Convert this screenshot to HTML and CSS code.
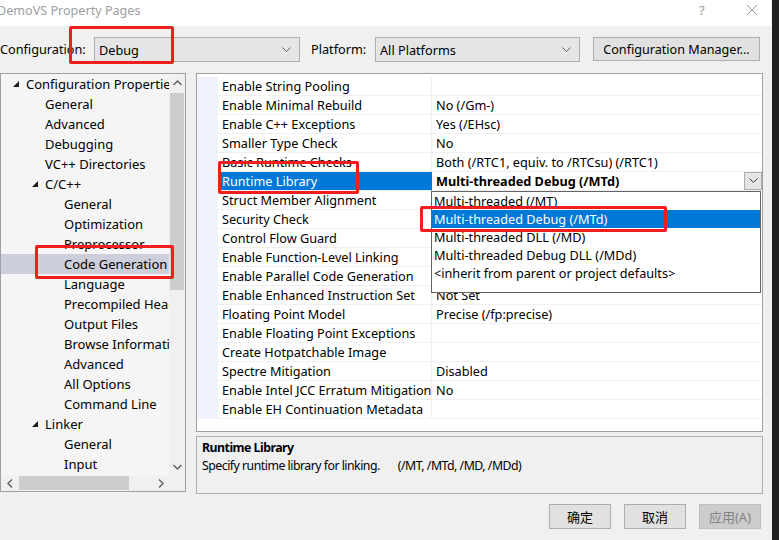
FILE: index.html
```html
<!DOCTYPE html>
<html>
<head>
<meta charset="utf-8">
<title>DemoVS Property Pages</title>
<link rel="stylesheet" href="styles.css">
</head>
<body>
<div class="screen">
  <div class="window">
    <div class="titlebar">
      <span class="title">DemoVS Property Pages</span>
      <span class="help">?</span>
      <span class="close"><svg width="12" height="12" viewBox="0 0 12 12"><path d="M1 1L11 11M11 1L1 11" stroke="#9a9a9a" stroke-width="1" fill="none"/></svg></span>
    </div>

    <div class="toolbar">
      <span class="lbl lbl-config">Configuration:</span>
      <div class="combo combo-config"><span>Debug</span><svg class="chev" width="9" height="6" viewBox="0 0 9 6"><path d="M0.5 0.5L4.5 4.5L8.5 0.5" stroke="#606060" fill="none"/></svg></div>
      <span class="lbl lbl-platform">Platform:</span>
      <div class="combo combo-platform"><span>All Platforms</span><svg class="chev" width="9" height="6" viewBox="0 0 9 6"><path d="M0.5 0.5L4.5 4.5L8.5 0.5" stroke="#606060" fill="none"/></svg></div>
      <button class="btn btn-cm">Configuration Manager...</button>
    </div>

    <div class="main">
      <div class="tree">
        <div class="tree-body">
          <div class="tree-items">
            <div class="ti l0"><span class="exp"><svg width="6" height="6" viewBox="0 0 6 6"><path d="M6 0V6H0Z" fill="#1e1e1e"/></svg></span>Configuration Properties</div>
            <div class="ti l1"><span class="exp"></span>General</div>
            <div class="ti l1"><span class="exp"></span>Advanced</div>
            <div class="ti l1"><span class="exp"></span>Debugging</div>
            <div class="ti l1"><span class="exp"></span>VC++ Directories</div>
            <div class="ti l1"><span class="exp"><svg width="6" height="6" viewBox="0 0 6 6"><path d="M6 0V6H0Z" fill="#1e1e1e"/></svg></span>C/C++</div>
            <div class="ti l2"><span class="exp"></span>General</div>
            <div class="ti l2"><span class="exp"></span>Optimization</div>
            <div class="ti l2"><span class="exp"></span>Preprocessor</div>
            <div class="ti l2 sel"><span class="exp"></span>Code Generation</div>
            <div class="ti l2"><span class="exp"></span>Language</div>
            <div class="ti l2"><span class="exp"></span>Precompiled Headers</div>
            <div class="ti l2"><span class="exp"></span>Output Files</div>
            <div class="ti l2"><span class="exp"></span>Browse Information</div>
            <div class="ti l2"><span class="exp"></span>Advanced</div>
            <div class="ti l2"><span class="exp"></span>All Options</div>
            <div class="ti l2"><span class="exp"></span>Command Line</div>
            <div class="ti l1"><span class="exp"><svg width="6" height="6" viewBox="0 0 6 6"><path d="M6 0V6H0Z" fill="#1e1e1e"/></svg></span>Linker</div>
            <div class="ti l2"><span class="exp"></span>General</div>
            <div class="ti l2"><span class="exp"></span>Input</div>
          </div>
          <div class="vscroll">
            <div class="sarrow"><svg width="9" height="6" viewBox="0 0 9 6"><path d="M0.5 5L4.5 1L8.5 5" stroke="#606060" stroke-width="1.4" fill="none"/></svg></div>
            <div class="vtrack"><div class="vthumb"></div></div>
            <div class="sarrow"><svg width="9" height="6" viewBox="0 0 9 6"><path d="M0.5 1L4.5 5L8.5 1" stroke="#606060" stroke-width="1.4" fill="none"/></svg></div>
          </div>
        </div>
        <div class="hscroll">
          <div class="harrow"><svg width="6" height="9" viewBox="0 0 6 9"><path d="M5 0.5L1 4.5L5 8.5" stroke="#606060" stroke-width="1.4" fill="none"/></svg></div>
          <div class="htrack"><div class="hthumb"></div></div>
          <div class="harrow"><svg width="6" height="9" viewBox="0 0 6 9"><path d="M1 0.5L5 4.5L1 8.5" stroke="#606060" stroke-width="1.4" fill="none"/></svg></div>
          <div class="corner"></div>
        </div>
      </div>

      <div class="rightcol">
        <div class="grid">
          <div class="rows">
            <div class="row"><div class="m"></div><div class="n">Enable String Pooling</div><div class="v"></div></div>
            <div class="row"><div class="m"></div><div class="n">Enable Minimal Rebuild</div><div class="v">No (/Gm-)</div></div>
            <div class="row"><div class="m"></div><div class="n">Enable C++ Exceptions</div><div class="v">Yes (/EHsc)</div></div>
            <div class="row"><div class="m"></div><div class="n">Smaller Type Check</div><div class="v">No</div></div>
            <div class="row"><div class="m"></div><div class="n">Basic Runtime Checks</div><div class="v">Both (/RTC1, equiv. to /RTCsu) (/RTC1)</div></div>
            <div class="row row-sel"><div class="m"></div><div class="n">Runtime Library</div><div class="v"><b>Multi-threaded Debug (/MTd)</b><span class="ddbtn"><svg width="9" height="6" viewBox="0 0 9 6"><path d="M0.5 0.5L4.5 4.5L8.5 0.5" stroke="#404040" fill="none"/></svg></span></div></div>
            <div class="row"><div class="m"></div><div class="n">Struct Member Alignment</div><div class="v"></div></div>
            <div class="row"><div class="m"></div><div class="n">Security Check</div><div class="v"></div></div>
            <div class="row"><div class="m"></div><div class="n">Control Flow Guard</div><div class="v"></div></div>
            <div class="row"><div class="m"></div><div class="n">Enable Function-Level Linking</div><div class="v"></div></div>
            <div class="row"><div class="m"></div><div class="n">Enable Parallel Code Generation</div><div class="v"></div></div>
            <div class="row"><div class="m"></div><div class="n">Enable Enhanced Instruction Set</div><div class="v">Not Set</div></div>
            <div class="row"><div class="m"></div><div class="n">Floating Point Model</div><div class="v">Precise (/fp:precise)</div></div>
            <div class="row"><div class="m"></div><div class="n">Enable Floating Point Exceptions</div><div class="v"></div></div>
            <div class="row"><div class="m"></div><div class="n">Create Hotpatchable Image</div><div class="v"></div></div>
            <div class="row"><div class="m"></div><div class="n">Spectre Mitigation</div><div class="v">Disabled</div></div>
            <div class="row"><div class="m"></div><div class="n">Enable Intel JCC Erratum Mitigation</div><div class="v">No</div></div>
            <div class="row"><div class="m"></div><div class="n">Enable EH Continuation Metadata</div><div class="v"></div></div>
          </div>
          <div class="droplist">
            <div class="di">Multi-threaded (/MT)</div>
            <div class="di di-sel">Multi-threaded Debug (/MTd)</div>
            <div class="di">Multi-threaded DLL (/MD)</div>
            <div class="di">Multi-threaded Debug DLL (/MDd)</div>
            <div class="di">&lt;inherit from parent or project defaults&gt;</div>
          </div>
        </div>
        <div class="desc">
          <div class="desc-title">Runtime Library</div>
          <div class="desc-text"><span class="desc-a">Specify runtime library for linking.</span><span>(/MT, /MTd, /MD, /MDd)</span></div>
        </div>
      </div>
    </div>

    <div class="buttons">
      <button class="btn btn-dlg">确定</button>
      <button class="btn btn-dlg">取消</button>
      <button class="btn btn-dlg btn-disabled">应用(A)</button>
    </div>

    <div class="mark mark-config"></div>
    <div class="mark mark-tree"></div>
    <div class="mark mark-prop"></div>
    <div class="mark mark-item"></div>
  </div>
  <div class="darkstrip"></div>
</div>
</body>
</html>
```

FILE: styles.css
```css
* { box-sizing: border-box; }
html, body { margin: 0; padding: 0; }
body {
  background: #1e1e1e;
  font-family: "Noto Sans", "Noto Sans CJK SC", sans-serif;
  font-size: 12.7px;
  color: #000;
}
.screen { display: flex; width: 779px; height: 540px; overflow: hidden; }
.window {
  position: relative;
  width: 772px;
  height: 540px;
  background: #f0f0f0;
  flex: none;
}
.darkstrip { flex: 1; background: #1f1f1f; }

.titlebar {
  height: 26px;
  background: #fff;
  display: flex;
  align-items: center;
  padding-bottom: 6px;
  font-size: 12.6px;
  color: #a0a0a0;
  width: 771px;
}
.title { margin-left: -3px; flex: 1; white-space: nowrap; }
.help { width: 14px; margin-right: 33px; font-size: 13px; color: #9a9a9a; }
.close { width: 16px; margin-right: 9px; display: flex; align-items: center; }

.toolbar {
  height: 47px;
  display: flex;
  align-items: flex-start;
  padding-top: 11px;
}
.lbl { height: 25px; line-height: 25px; white-space: nowrap; }
.lbl-config { width: 94px; padding-left: 0; }
.lbl-platform { width: 64px; margin-left: 11px; }
.combo {
  height: 25px;
  background: #e5e5e5;
  border: 1px solid #adadad;
  display: flex;
  align-items: center;
  padding: 0 8px 0 4px;
}
.combo span { flex: 1; }
.combo-config { width: 206px; }
.combo-platform { width: 205px; }
.btn {
  font-family: "Noto Sans", "Noto Sans CJK SC", sans-serif;
  background: #e1e1e1;
  border: 1px solid #adadad;
  color: #000;
  padding: 0;
  margin: 0;
}
.btn-cm { width: 167px; height: 24px; margin-left: 13px; font-size: 12.6px; }

.main { display: flex; align-items: flex-start; }
.tree {
  width: 186px;
  height: 419px;
  border: 1px solid #a0a0a0;
  background: #f5f5f5;
  display: flex;
  flex-direction: column;
}
.tree-body { flex: 1; display: flex; min-height: 0; }
.tree-items { flex: 1; overflow: hidden; }
.ti {
  height: 20px;
  display: flex;
  align-items: center;
  white-space: nowrap;
  font-size: 13px;
}
.ti.l0 { padding-left: 9px; }
.ti.l1 { padding-left: 28px; }
.ti.l2 { padding-left: 47px; }
.exp { width: 16px; flex: none; display: flex; align-items: center; padding-left: 3px; }
.ti.sel { background: #cccedb; }

.vscroll {
  width: 16px;
  display: flex;
  flex-direction: column;
  background: #f0f0f0;
}
.sarrow { height: 17px; display: flex; align-items: center; justify-content: center; }
.vtrack { flex: 1; padding: 2px 1px 0 1px; }
.vthumb { height: 197px; background: #cdcdcd; }
.hscroll { height: 16px; display: flex; background: #f0f0f0; }
.harrow { width: 17px; display: flex; align-items: center; justify-content: center; }
.htrack { flex: 1; padding: 1px 0 1px 1px; }
.hthumb { width: 110px; height: 100%; background: #cdcdcd; }
.corner { width: 16px; background: #f0f0f0; }

.rightcol { margin-left: 10px; width: 567px; display: flex; flex-direction: column; }
.grid {
  position: relative;
  height: 359px;
  border: 1px solid #a0a0a0;
  background: #fff;
  padding-top: 3px;
}
.row {
  display: flex;
  height: 19px;
  white-space: nowrap;
}
.row .m { width: 21px; background: #f0f3f9; flex: none; }
.row .n {
  width: 214px;
  flex: none;
  padding-left: 4px;
  line-height: 18px;
  border-bottom: 1px solid #f0f0f3;
  border-right: 1px solid #f0f0f3;
  overflow: hidden;
}
.row .v {
  flex: 1;
  padding-left: 4px;
  line-height: 18px;
  border-bottom: 1px solid #f0f0f3;
  display: flex;
  align-items: center;
}
.row-sel .n { background: #0078d7; color: #fff; border-right-color: #0078d7; }
.row-sel .v b { flex: 1; font-weight: 700; }
.ddbtn {
  width: 18px;
  height: 18px;
  background: #e5e5e5;
  border: 1px solid #adadad;
  display: flex;
  align-items: center;
  justify-content: center;
}
.droplist {
  position: absolute;
  left: 234px;
  top: 117px;
  width: 330px;
  height: 102px;
  background: #fff;
  border: 1px solid #646464;
  padding-bottom: 10px;
}
.di { height: 18px; line-height: 18px; padding-left: 2px; white-space: nowrap; }
.di-sel { background: #0078d7; color: #fff; }

.desc {
  margin-top: 4px;
  height: 58px;
  border: 1px solid #adadad;
  background: #f0f0f0;
  padding: 2px 5px;
  font-size: 12.3px;
  letter-spacing: -0.5px;
}
.desc-title { font-weight: 700; line-height: 18px; }
.desc-text { line-height: 18px; white-space: nowrap; display: flex; }
.desc-a { margin-right: 18px; }

.buttons {
  display: flex;
  justify-content: flex-end;
  gap: 13px;
  padding-top: 10px;
  padding-right: 11px;
}
.btn-dlg { width: 62px; height: 25px; font-size: 13px; }
.btn-disabled { background: #cccccc; color: #838383; border-color: #bfbfbf; }

.mark {
  position: absolute;
  border: 3px solid #f21d1d;
  border-radius: 2px;
}
.mark-config { left: 69px; top: 26px; width: 105px; height: 38px; }
.mark-tree { left: 35px; top: 245px; width: 139px; height: 34px; }
.mark-prop { left: 218px; top: 161px; width: 141px; height: 33px; }
.mark-item { left: 420px; top: 206px; width: 247px; height: 26px; }
```
